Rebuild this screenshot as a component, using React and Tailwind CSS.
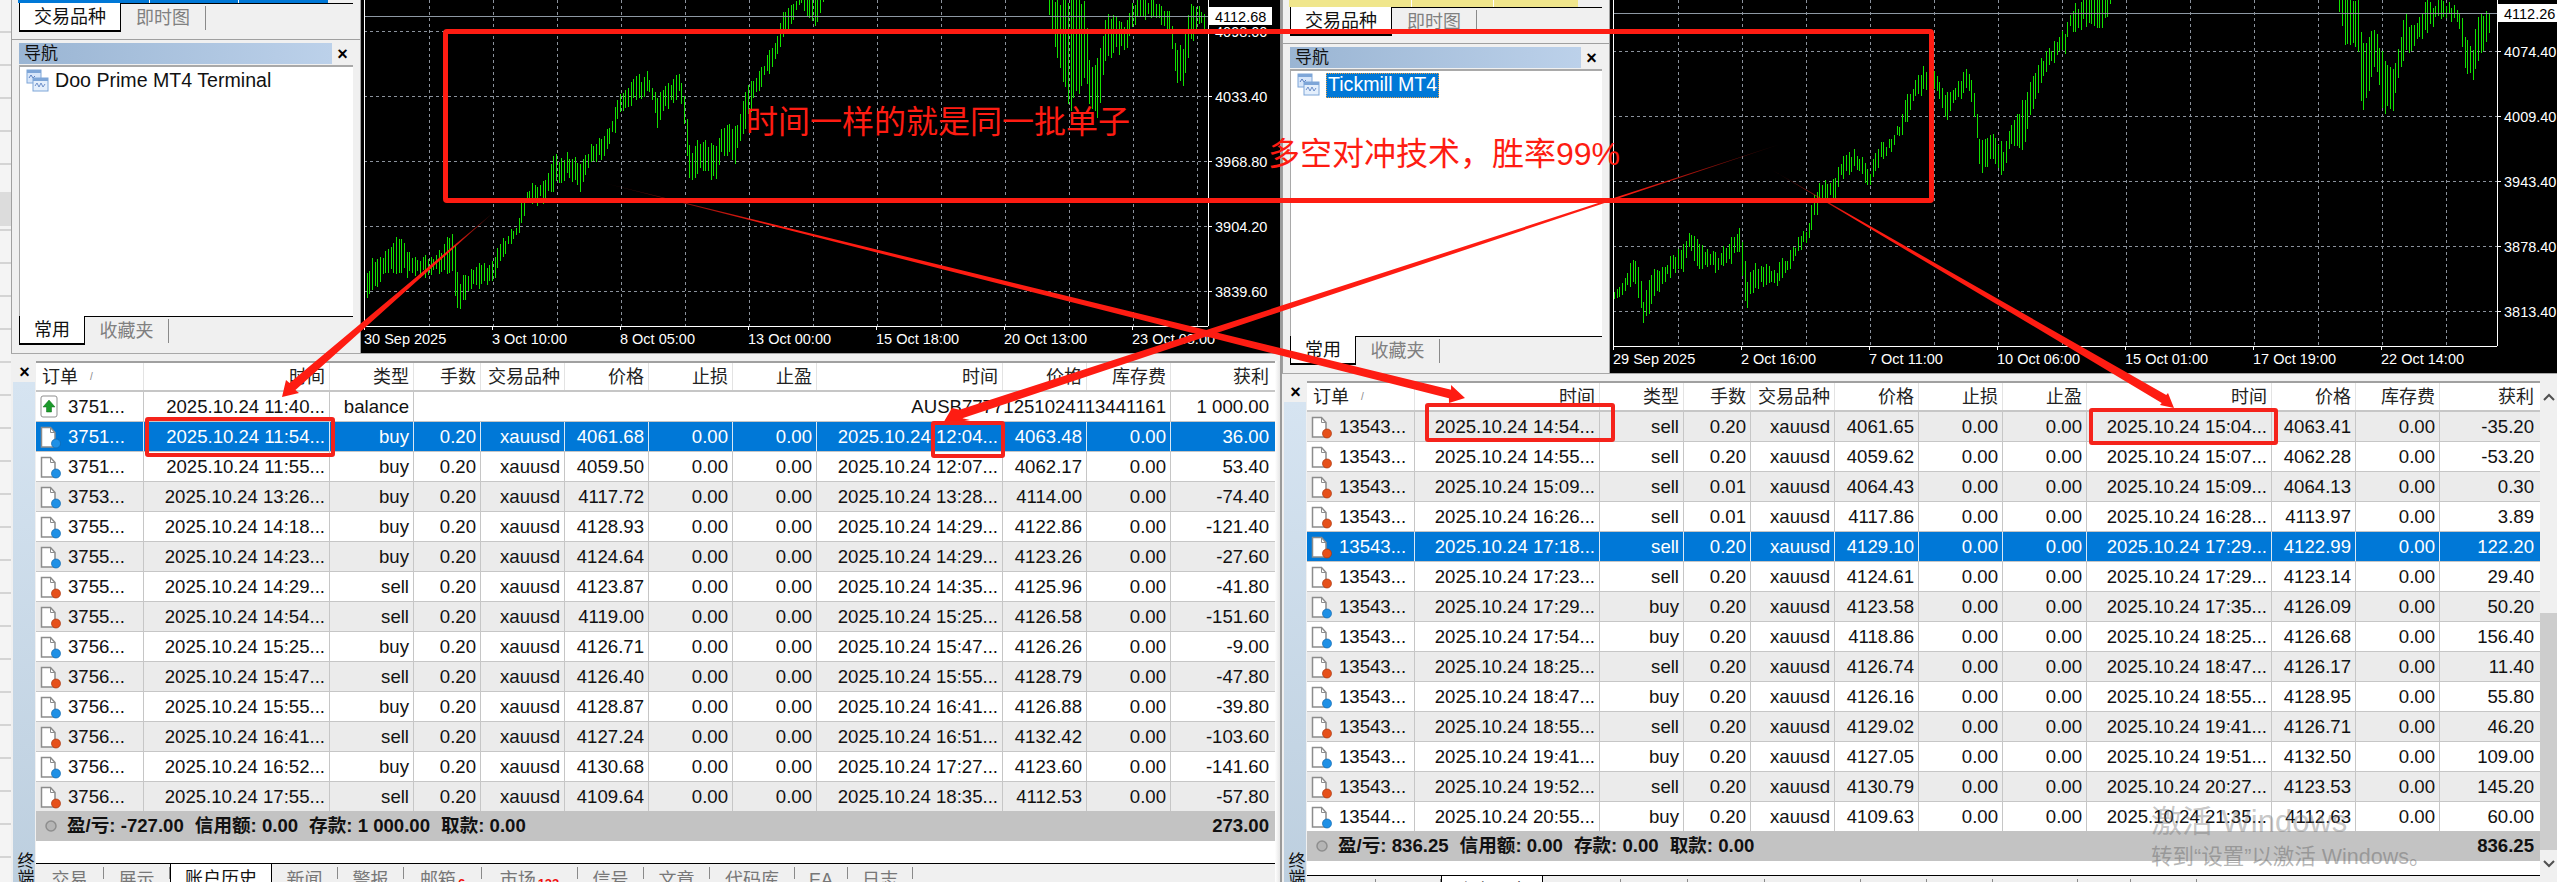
import React from "react";

const SANS = "font-['Liberation_Sans','Noto_Sans_CJK_SC',sans-serif]";

function seeded(a) {
  return () => {
    a |= 0; a = (a + 0x6d2b79f5) | 0;
    let t = Math.imul(a ^ (a >>> 15), 1 | a);
    t = (t + Math.imul(t ^ (t >>> 7), 61 | t)) ^ t;
    return ((t ^ (t >>> 14)) >>> 0) / 4294967296;
  };
}

const leftKeys = [
  [364,277,300],[372,262,290],[385,255,275],[398,235,270],[410,255,275],[430,260,275],[453,235,270],[456,255,310],[458,285,312],
  [470,270,285],[490,265,285],[498,245,265],[505,240,250],[516,225,235],[520,210,230],[527,190,205],[545,180,200],[552,160,190],
  [565,155,175],[580,165,190],[590,145,165],[603,142,155],[615,110,130],[622,90,110],[635,80,100],[648,75,90],[658,95,125],
  [670,85,100],[680,75,95],[684,100,125],[690,150,185],[700,140,170],[715,150,180],[722,125,150],[735,130,160],[745,90,125],
  [760,70,85],[775,45,60],[782,12,35],[790,10,25],[800,-5,5],[812,-10,25],[820,-5,15],[830,-30,-15],[1045,-30,-15],[1054,0,48],
  [1070,0,110],[1085,0,75],[1090,75,110],[1098,60,115],[1105,20,60],[1115,15,50],[1125,30,50],[1130,5,35],[1140,0,15],[1155,0,20],
  [1170,15,30],[1176,50,80],[1183,50,85],[1190,0,45],[1200,10,25],[1204,15,30],
];
const rightKeys = [
  [1614,295,302],[1625,280,295],[1632,255,280],[1640,265,300],[1642,305,330],[1650,280,310],[1655,270,295],[1670,260,275],[1685,245,270],
  [1688,230,245],[1698,245,265],[1720,255,270],[1740,228,250],[1744,250,300],[1747,280,305],[1755,265,285],[1775,270,285],[1790,255,268],
  [1800,235,250],[1808,225,240],[1812,205,225],[1820,180,200],[1835,180,195],[1840,160,180],[1855,150,165],[1870,170,185],[1880,145,160],
  [1890,140,150],[1900,125,135],[1905,100,125],[1915,80,95],[1925,68,90],[1937,75,95],[1945,100,120],[1955,85,100],[1970,70,90],
  [1975,100,120],[1980,140,170],[1995,135,160],[2003,150,175],[2012,125,140],[2022,105,150],[2035,70,100],[2050,50,65],[2065,30,50],
  [2070,10,30],[2090,-5,20],[2100,-5,30],[2110,-5,5],[2120,-30,-15],[2335,-30,-15],[2345,0,45],[2360,0,50],[2361,50,120],[2375,30,65],
  [2383,60,110],[2392,75,110],[2397,50,80],[2405,15,55],[2412,30,50],[2425,5,30],[2445,0,15],[2460,10,25],[2465,40,70],[2472,50,80],
  [2478,15,60],[2490,15,30],
];

function barsPath(keys, seed) {
  const r = seeded(seed);
  let d = "";
  const start = keys[0][0], end = keys[keys.length - 1][0];
  let k = 0;
  for (let x = start; x <= end; x += 8 / 3) {
    while (k < keys.length - 2 && keys[k + 1][0] < x) k++;
    const a = keys[k], b = keys[k + 1];
    const t = (x - a[0]) / (b[0] - a[0]);
    const top = a[1] + (b[1] - a[1]) * t + (r() - 0.5) * 10;
    const bot = a[2] + (b[2] - a[2]) * t + (r() - 0.5) * 10;
    const y1 = Math.min(top, bot - 6), y2 = Math.max(bot, top + 6);
    if (y2 < 0) continue;
    d += `M${Math.round(x) + 0.5} ${Math.round(y1)}V${Math.round(y2)}`;
  }
  return d;
}

function Chart({ box, plotL, plotR, plotB, priceY, priceTxt, labelW, xs, hY, labels, dates, keys, seed }) {
  return (
    <svg viewBox={box.join(" ")} width={box[2]} height={box[3]} className="block">
      <rect x={box[0]} y={box[1]} width={box[2]} height={box[3]} fill="#000" />
      {xs.map((x) => (
        <line key={x} x1={x + 0.5} x2={x + 0.5} y1="0" y2={plotB} stroke="#8b929c" strokeDasharray="3 3" />
      ))}
      {hY.map((y) => (
        <line key={y} x1={plotL} x2={plotR} y1={y + 0.5} y2={y + 0.5} stroke="#8b929c" strokeDasharray="3 3" />
      ))}
      <path d={barsPath(keys, seed)} stroke="#12e000" strokeWidth="1" fill="none" shapeRendering="crispEdges" />
      <line x1={plotL} x2={plotR} y1={priceY + 0.5} y2={priceY + 0.5} stroke="#8d98a3" />
      <line x1={plotL + 0.5} x2={plotL + 0.5} y1="0" y2={plotB} stroke="#fff" />
      <line x1={plotR + 0.5} x2={plotR + 0.5} y1="0" y2={plotB} stroke="#fff" />
      <line x1={plotL} x2={plotR} y1={plotB + 0.5} y2={plotB + 0.5} stroke="#fff" />
      {dates.map(([x, t]) => (
        <g key={t}>
          <line x1={x + 0.5} x2={x + 0.5} y1={plotB} y2={plotB + 4} stroke="#fff" />
          <text x={x} y={plotB + 18} fill="#fff" fontSize="14.5">{t}</text>
        </g>
      ))}
      {labels.map(([y, t]) => (
        <g key={t}>
          <line x1={plotR} x2={plotR + 4} y1={y + 0.5} y2={y + 0.5} stroke="#fff" />
          <text x={plotR + 7} y={y + 6} fill="#fff" fontSize="14.5">{t}</text>
        </g>
      ))}
      <rect x={plotR + 1} y={priceY - 9} width={labelW} height="18" fill="#fff" />
      <text x={plotR + 7} y={priceY + 6} fill="#000" fontSize="14.5">{priceTxt}</text>
    </svg>
  );
}

function TreeIcon() {
  return (
    <svg width="24" height="24" viewBox="0 0 24 24" className="shrink-0">
      <rect x="1" y="1" width="14" height="13" fill="#d7e6fa" stroke="#7ea6d8" />
      <rect x="1" y="1" width="14" height="3" fill="#7ea6d8" />
      <path d="M3 9l2-3 2 3 2-2" stroke="#5a7fc0" fill="none" />
      <rect x="7" y="9" width="15" height="13" fill="#e4effc" stroke="#7ea6d8" />
      <rect x="7" y="9" width="15" height="3" fill="#7ea6d8" />
      <path d="M9 17l2-3 2 4 2-4 2 4 2-3" stroke="#6d8fc9" fill="none" />
    </svg>
  );
}

function NavTabs({ items, widths }) {
  return (
    <div className="flex h-[29px] border-t border-black">
      <div className={`${widths[0]} -mt-px flex items-center justify-center bg-white border-x border-b-2 border-x-black border-b-black text-[18px] text-[#111] leading-none`}>{items[0]}</div>
      <div className={`${widths[1]} flex items-center justify-center my-[2px] border-r border-[#8a8a8a] text-[18px] text-[#808080] leading-none`}>{items[1]}</div>
    </div>
  );
}

function NavPanel({ widthCls, stripH, stripCls, stripW, children }) {
  return (
    <div className={`${widthCls} h-full shrink-0 bg-[#f0f0f0] border-l border-r border-[#a0a0a0] flex flex-col`}>
      <div className={`${stripH} flex ml-[6px] shrink-0`}>
        <div className={`${stripW[0]} ${stripCls} border-r border-white`} />
        <div className={`${stripW[1]} ${stripCls} border-r border-white`} />
        <div className={`${stripW[2]} ${stripCls}`} />
      </div>
      <div className="px-[7px] shrink-0">
        <NavTabs items={["交易品种", "即时图"]} widths={["w-[102px]", "w-[85px]"]} />
      </div>
      <div className="h-[7px] shrink-0 border-b border-[#a0a0a0] box-content" />
      <div className="px-[7px] pt-[3px] flex-1 min-h-0 flex flex-col pb-[8px]">
        <div className="flex h-[21px] shrink-0">
          <div className="flex-1 bg-[linear-gradient(90deg,#9ab5d3,#bcd1ea)] pl-[5px] text-[17px] leading-[21px] text-[#111]">导航</div>
          <div className="w-[21px] flex items-center justify-center text-[18px] font-bold text-black leading-none">×</div>
        </div>
        <div className="flex-1 min-h-0 mt-[1px] bg-white border-t-2 border-l border-[#a9a9a9]">
          {children}
        </div>
        <NavTabs items={["常用", "收藏夹"]} widths={["w-[66px]", "w-[84px]"]} />
      </div>
    </div>
  );
}

function OrderIcon({ type }) {
  if (type === "balance") {
    return (
      <svg width="22" height="24" viewBox="0 0 22 24" className="shrink-0">
        <rect x="1" y="1" width="16" height="21" rx="2" fill="#fff" stroke="#8f8f8f" />
        <path d="M9 5l6 7h-3.5v5h-5v-5H3z" fill="#1b9a2a" stroke="#0f6f1b" strokeWidth="0.5" />
      </svg>
    );
  }
  const color = type === "buy" ? "#1e90e6" : "#e6501a";
  const edge = type === "buy" ? "#0f66ad" : "#a8340c";
  return (
    <svg width="22" height="24" viewBox="0 0 22 24" className="shrink-0">
      <path d="M1.5 2.5h9l4.5 5v14.500h-13.500z" fill="#fff" stroke="#8c8c8c" strokeWidth="1.500" />
      <path d="M10.500 2.500v5h4.500" fill="none" stroke="#8c8c8c" />
      <circle cx="16" cy="18.500" r="4.500" fill={color} stroke={edge} strokeWidth="0.7" />
    </svg>
  );
}

const CELL = "flex items-center justify-end pr-[4px] pt-[2px] overflow-hidden whitespace-nowrap";
const IDCELL = "flex items-center pl-[4px] gap-[6px] overflow-hidden";

function Row({ grid, d, selected, gray }) {
  const bg = selected ? "bg-[#0078d7] text-white" : gray ? "bg-[#ebebeb] text-[#111]" : "bg-white text-[#111]";
  const line = selected ? "border-r border-[#d9e8f5]" : "border-r border-[#c6c6c6]";
  if (d.type === "balance") {
    return (
      <div className={`grid ${grid} h-[30px] border-b border-[#c6c6c6] ${bg}`}>
        <div className={`${IDCELL} ${line}`}><OrderIcon type="balance" /><span className="pt-[2px]">{d.id}</span></div>
        <div className={`${CELL} ${line}`}>{d.open}</div>
        <div className={`${CELL} ${line}`}>balance</div>
        <div className={`${CELL} ${line} col-span-8`}>{d.comment}</div>
        <div className={`${CELL} pr-[6px]`}>{d.profit}</div>
      </div>
    );
  }
  return (
    <div className={`grid ${grid} h-[30px] border-b border-[#c6c6c6] ${bg}`}>
      <div className={`${IDCELL} ${line}`}><OrderIcon type={d.type} /><span className="pt-[2px]">{d.id}</span></div>
      <div className={`${CELL} ${line}`}>{d.open}</div>
      <div className={`${CELL} ${line}`}>{d.type}</div>
      <div className={`${CELL} ${line}`}>{d.lots || "0.20"}</div>
      <div className={`${CELL} ${line}`}>xauusd</div>
      <div className={`${CELL} ${line}`}>{d.openPrice}</div>
      <div className={`${CELL} ${line}`}>0.00</div>
      <div className={`${CELL} ${line}`}>0.00</div>
      <div className={`${CELL} ${line}`}>{d.close}</div>
      <div className={`${CELL} ${line}`}>{d.closePrice}</div>
      <div className={`${CELL} ${line}`}>0.00</div>
      <div className={`${CELL} pr-[6px]`}>{d.profit}</div>
    </div>
  );
}

function mk(id, o, type, openPrice, c, closePrice, profit, lots) {
  return { id, open: `2025.10.24 ${o}...`, type, openPrice, close: `2025.10.24 ${c}...`, closePrice, profit, lots };
}

const leftRows = [
  { id: "3751...", open: "2025.10.24 11:40...", type: "balance", comment: "AUSB77771251024113441161", profit: "1 000.00" },
  mk("3751...", "11:54", "buy", "4061.68", "12:04", "4063.48", "36.00"),
  mk("3751...", "11:55", "buy", "4059.50", "12:07", "4062.17", "53.40"),
  mk("3753...", "13:26", "buy", "4117.72", "13:28", "4114.00", "-74.40"),
  mk("3755...", "14:18", "buy", "4128.93", "14:29", "4122.86", "-121.40"),
  mk("3755...", "14:23", "buy", "4124.64", "14:29", "4123.26", "-27.60"),
  mk("3755...", "14:29", "sell", "4123.87", "14:35", "4125.96", "-41.80"),
  mk("3755...", "14:54", "sell", "4119.00", "15:25", "4126.58", "-151.60"),
  mk("3756...", "15:25", "buy", "4126.71", "15:47", "4126.26", "-9.00"),
  mk("3756...", "15:47", "sell", "4126.40", "15:55", "4128.79", "-47.80"),
  mk("3756...", "15:55", "buy", "4128.87", "16:41", "4126.88", "-39.80"),
  mk("3756...", "16:41", "sell", "4127.24", "16:51", "4132.42", "-103.60"),
  mk("3756...", "16:52", "buy", "4130.68", "17:27", "4123.60", "-141.60"),
  mk("3756...", "17:55", "sell", "4109.64", "18:35", "4112.53", "-57.80"),
];

const rightRows = [
  mk("13543...", "14:54", "sell", "4061.65", "15:04", "4063.41", "-35.20"),
  mk("13543...", "14:55", "sell", "4059.62", "15:07", "4062.28", "-53.20"),
  mk("13543...", "15:09", "sell", "4064.43", "15:09", "4064.13", "0.30", "0.01"),
  mk("13543...", "16:26", "sell", "4117.86", "16:28", "4113.97", "3.89", "0.01"),
  mk("13543...", "17:18", "sell", "4129.10", "17:29", "4122.99", "122.20"),
  mk("13543...", "17:23", "sell", "4124.61", "17:29", "4123.14", "29.40"),
  mk("13543...", "17:29", "buy", "4123.58", "17:35", "4126.09", "50.20"),
  mk("13543...", "17:54", "buy", "4118.86", "18:25", "4126.68", "156.40"),
  mk("13543...", "18:25", "sell", "4126.74", "18:47", "4126.17", "11.40"),
  mk("13543...", "18:47", "buy", "4126.16", "18:55", "4128.95", "55.80"),
  mk("13543...", "18:55", "sell", "4129.02", "19:41", "4126.71", "46.20"),
  mk("13543...", "19:41", "buy", "4127.05", "19:51", "4132.50", "109.00"),
  mk("13543...", "19:52", "sell", "4130.79", "20:27", "4123.53", "145.20"),
  mk("13544...", "20:55", "buy", "4109.63", "21:35", "4112.63", "60.00"),
];

const HEADS = ["时间", "类型", "手数", "交易品种", "价格", "止损", "止盈", "时间", "价格", "库存费"];

function Header({ grid }) {
  return (
    <div className={`grid ${grid} h-[31px] bg-white border-t-2 border-b-2 border-t-[#a0a0a0] border-b-[#c6c6c6] text-[18px] text-[#222]`}>
      <div className="flex items-center pl-[6px] pt-[1px] border-r border-[#e3e3e3]">
        <span>订单</span><span className="ml-[12px] text-[10px] text-[#888]">/</span>
      </div>
      {HEADS.map((h, i) => (
        <div key={i} className="flex items-center justify-end pr-[4px] pt-[1px] border-r border-[#e3e3e3]">{h}</div>
      ))}
      <div className="flex items-center justify-end pr-[6px] pt-[1px]">获利</div>
    </div>
  );
}

function Tab({ w, label, active, badge }) {
  if (active) {
    return <div className={`${w} shrink-0 -mt-px bg-white border-x border-black flex justify-center pt-[4px] text-[18px] leading-[24px] text-[#111]`}>{label}</div>;
  }
  return (
    <div className={`${w} shrink-0 flex justify-center pt-[4px] border-r border-[#8a8a8a] my-[3px] text-[18px] leading-[18px] text-[#777]`}>
      <span>{label}</span>
      {badge ? <span className="ml-[2px] mt-[6px] text-[13px] font-bold text-[#f01010] leading-[13px]">{badge}</span> : null}
    </div>
  );
}

function BottomTabs({ widths }) {
  const names = [["交易"], ["展示"], ["账户历史", true], ["新闻"], ["警报"], ["邮箱", false, "6"], ["市场", false, "123"], ["信号"], ["文章"], ["代码库"], ["EA"], ["日志"]];
  return (
    <div className="flex flex-1 min-h-0 bg-[#f0f0f0] border-t border-black overflow-hidden">
      {names.map(([n, a, b], i) => (
        <Tab key={n} w={widths[i]} label={n} active={a} badge={b} />
      ))}
    </div>
  );
}

function Terminal({ grid, rows, selected, grayOdd, summary, total, widths, whiteH, scroll, widthCls }) {
  return (
    <div className="flex-1 min-h-0 flex flex-col bg-[#f0f0f0] border-t border-[#a8a8a8]">
      <div className="h-[7px] shrink-0" />
      <div className="flex-1 min-h-0 flex">
        <div className="w-[25px] shrink-0 flex flex-col pl-[2px]">
          <div className="h-[21px] shrink-0 flex items-center justify-center text-[18px] font-bold leading-none text-black">×</div>
          <div className="flex-1 mr-px bg-[linear-gradient(180deg,#d6e4f1,#bdcfdf)] flex flex-col justify-end items-center overflow-hidden">
            <span className="[writing-mode:vertical-rl] text-[17px] leading-[17px] text-[#111] -mb-[4px]">终端</span>
          </div>
        </div>
        <div className={`${widthCls} shrink-0 flex flex-col bg-white text-[18.6px] leading-none`}>
          <Header grid={grid} />
          {rows.map((r, i) => (
            <Row key={i} grid={grid} d={r} selected={i === selected} gray={(i % 2 === 1) === grayOdd} />
          ))}
          <div className="h-[30px] shrink-0 flex items-center bg-[#c3c3c3] font-bold text-[#111] -mt-px">
            <svg width="14" height="14" viewBox="0 0 14 14" className="ml-[8px] shrink-0">
              <circle cx="7" cy="7" r="5" fill="#b5b5b5" stroke="#8e8e8e" strokeWidth="1.500" />
            </svg>
            <div className="flex flex-1 gap-[11px] pl-[9px] pt-[1px]">
              {summary.map((s) => <span key={s}>{s}</span>)}
            </div>
            <span className="pr-[6px] pt-[1px]">{total}</span>
          </div>
          <div className={`${whiteH} shrink-0`} />
          <BottomTabs widths={widths} />
        </div>
        {scroll ? (
          <div className="flex-1 min-w-0 flex flex-col bg-[#f0f0f0] items-stretch">
            <div className="h-[31px] flex items-center justify-center">
              <svg width="14" height="10" viewBox="0 0 14 10"><path d="M2 8l5-5 5 5" stroke="#505050" strokeWidth="2" fill="none" /></svg>
            </div>
            <div className="h-[201px]" />
            <div className="h-[237px] bg-[#cdcdcd]" />
            <div className="h-[28px] flex items-center justify-center">
              <svg width="14" height="10" viewBox="0 0 14 10"><path d="M2 2l5 5 5-5" stroke="#505050" strokeWidth="2" fill="none" /></svg>
            </div>
          </div>
        ) : (
          <div className="flex-1 min-w-0 bg-[linear-gradient(90deg,#ffffff,#e6e6e6)]" />
        )}
      </div>
    </div>
  );
}

function Arrow({ id, tail, tip, b1, b2, w }) {
  const mx = (b1[0] + b2[0]) / 2, my = (b1[1] + b2[1]) / 2;
  const dx = mx - tail[0], dy = my - tail[1];
  const len = Math.hypot(dx, dy);
  const nx = (-dy / len) * (w / 2), ny = (dx / len) * (w / 2);
  const first = b1[0] * nx + b1[1] * ny > b2[0] * nx + b2[1] * ny;
  const pts = [tail, [mx + nx, my + ny], first ? b1 : b2, tip, first ? b2 : b1, [mx - nx, my - ny]];
  return (
    <g>
      <defs>
        <linearGradient id={id} gradientUnits="userSpaceOnUse" x1={tail[0]} y1={tail[1]} x2={tip[0]} y2={tip[1]}>
          <stop offset="0" stopColor="#fe1c12" stopOpacity="0.15" />
          <stop offset="0.2" stopColor="#fe1c12" stopOpacity="1" />
          <stop offset="1" stopColor="#fe1c12" stopOpacity="1" />
        </linearGradient>
      </defs>
      <polygon points={pts.map((p) => p.join(",")).join(" ")} fill={`url(#${id})`} />
    </g>
  );
}

export default function App() {
  return (
    <div className={`relative flex w-[2557px] h-[882px] overflow-hidden bg-[#f0f0f0] ${SANS}`}>
      {/* spreadsheet edge behind the windows */}
      <div className="w-[11px] shrink-0 h-full pt-[192px] bg-[repeating-linear-gradient(180deg,#f4f4f4_0px,#f4f4f4_31px,#d4d4d4_31px,#d4d4d4_33px)]">
        <div className="h-[34px] bg-[#dcdcdc]" />
      </div>

      {/* left terminal window */}
      <div className="w-[1269px] shrink-0 h-full flex flex-col">
        <div className="h-[353px] shrink-0 flex">
          <NavPanel widthCls="w-[350px]" stripH="h-[3px]" stripCls="bg-[#0078d7]" stripW={["w-[132px]", "w-[89px]", "w-[89px]"]}>
            <div className="flex items-center h-[26px] mt-[1px] pl-[6px] gap-[5px] text-[19.6px] text-[#111]">
              <TreeIcon />
              <span>Doo Prime MT4 Terminal</span>
            </div>
          </NavPanel>
          <Chart
            box={[361, 0, 919, 353]}
            plotL={364} plotR={1208} plotB={326} priceY={16} priceTxt="4112.68" labelW={63}
            xs={[429, 493, 557, 621, 685, 749, 813, 877, 941, 1005, 1069, 1133, 1197]}
            hY={[31, 96, 161, 226, 291]}
            labels={[[31, "4098.00"], [96, "4033.40"], [161, "3968.80"], [226, "3904.20"], [291, "3839.60"]]}
            dates={[[364, "30 Sep 2025"], [492, "3 Oct 10:00"], [620, "8 Oct 05:00"], [748, "13 Oct 00:00"], [876, "15 Oct 18:00"], [1004, "20 Oct 13:00"], [1132, "23 Oct 08:00"]]}
            keys={leftKeys} seed={11}
          />
        </div>
        <Terminal
          grid="grid-cols-[108px_186px_84px_67px_84px_84px_84px_84px_186px_84px_84px_104px]"
          widthCls="w-[1239px]"
          rows={leftRows} selected={1} grayOdd={true}
          summary={["盈/亏: -727.00", "信用额: 0.00", "存款: 1 000.00", "取款: 0.00"]}
          total="273.00" whiteH="h-[22px]"
          widths={["w-[68px]", "w-[66px]", "w-[102px]", "w-[66px]", "w-[66px]", "w-[78px]", "w-[96px]", "w-[66px]", "w-[66px]", "w-[85px]", "w-[53px]", "w-[65px]"]}
        />
      </div>

      <div className="w-[2px] shrink-0 h-full bg-[#9a9a9a]" />

      {/* right terminal window */}
      <div className="flex-1 min-w-0 h-full flex flex-col">
        <div className="h-[373px] shrink-0 flex">
          <NavPanel widthCls="w-[328px]" stripH="h-[7px]" stripCls="bg-[#f0e68c]" stripW={["w-[123px]", "w-[82px]", "w-[84px]"]}>
            <div className="flex items-center h-[26px] mt-[1px] pl-[6px] gap-[5px] text-[19.6px]">
              <TreeIcon />
              <span className="px-[1px] h-[25px] flex items-center bg-[#0078d7] text-white border border-dotted border-[#f0a040]">Tickmill MT4</span>
            </div>
          </NavPanel>
          <Chart
            box={[1610, 0, 947, 373]}
            plotL={1613} plotR={2497} plotB={346} priceY={13} priceTxt="4112.26" labelW={59}
            xs={[1678, 1742, 1806, 1870, 1934, 1998, 2062, 2126, 2190, 2254, 2318, 2382, 2446]}
            hY={[51, 116, 181, 246, 311]}
            labels={[[51, "4074.40"], [116, "4009.40"], [181, "3943.40"], [246, "3878.40"], [311, "3813.40"]]}
            dates={[[1613, "29 Sep 2025"], [1741, "2 Oct 16:00"], [1869, "7 Oct 11:00"], [1997, "10 Oct 06:00"], [2125, "15 Oct 01:00"], [2253, "17 Oct 19:00"], [2381, "22 Oct 14:00"]]}
            keys={rightKeys} seed={29}
          />
        </div>
        <Terminal
          grid="grid-cols-[108px_185px_84px_67px_84px_84px_84px_84px_185px_84px_84px_100px]"
          widthCls="w-[1233px]"
          rows={rightRows} selected={4} grayOdd={false}
          summary={["盈/亏: 836.25", "信用额: 0.00", "存款: 0.00", "取款: 0.00"]}
          total="836.25" whiteH="h-[14px]" scroll
          widths={["w-[69px]", "w-[65px]", "w-[102px]", "w-[78px]", "w-[67px]", "w-[77px]", "w-[96px]", "w-[66px]", "w-[66px]", "w-[85px]", "w-[53px]", "w-[66px]"]}
        />
      </div>

      {/* red annotations drawn over the screenshot */}
      <svg viewBox="0 0 2557 882" width="2557" height="882" className="absolute inset-0 pointer-events-none">
        <Arrow id="a1" tail={[494, 212]} tip={[282, 397]} b1={[286, 380]} b2={[299, 393]} w={9} />
        <Arrow id="a2" tail={[1790, 141]} tip={[942, 425]} b1={[952, 408]} b2={[970, 420]} w={9} />
        <Arrow id="a3" tail={[604, 183]} tip={[1465, 398]} b1={[1451, 385]} b2={[1449, 403]} w={9} />
        <Arrow id="a4" tail={[1772, 170]} tip={[2174, 408]} b1={[2168, 393]} b2={[2160, 405]} w={9} />
      </svg>
      <div className="absolute left-[443px] top-[29px] w-[1491px] h-[174px] border-[5px] border-[#fe1c12] rounded-[4px]" />
      <div className="absolute left-[145px] top-[417px] w-[190px] h-[40px] border-[4px] border-[#f5231b] rounded-[3px]" />
      <div className="absolute left-[931px] top-[421px] w-[74px] h-[37px] border-[4px] border-[#f5231b] rounded-[3px]" />
      <div className="absolute left-[1425px] top-[403px] w-[190px] h-[39px] border-[4px] border-[#f5231b] rounded-[3px]" />
      <div className="absolute left-[2089px] top-[408px] w-[189px] h-[37px] border-[4px] border-[#f5231b] rounded-[3px]" />
      <div className="absolute left-[746px] top-[106px] text-[32px] leading-[32px] text-[#fe1c12] whitespace-nowrap">时间一样的就是同一批单子</div>
      <div className="absolute left-[1268px] top-[138px] text-[32px] leading-[32px] text-[#fe1c12] whitespace-nowrap">多空对冲技术，胜率99%</div>

      {/* Windows activation watermark */}
      <div className="absolute left-[2151px] top-[806px] text-[31px] leading-[32px] text-[#6e6e6e]/40 whitespace-nowrap">激活 Windows</div>
      <div className="absolute left-[2151px] top-[845px] text-[21.5px] leading-[24px] text-[#6e6e6e]/50 whitespace-nowrap">转到“设置”以激活 Windows。</div>
    </div>
  );
}
